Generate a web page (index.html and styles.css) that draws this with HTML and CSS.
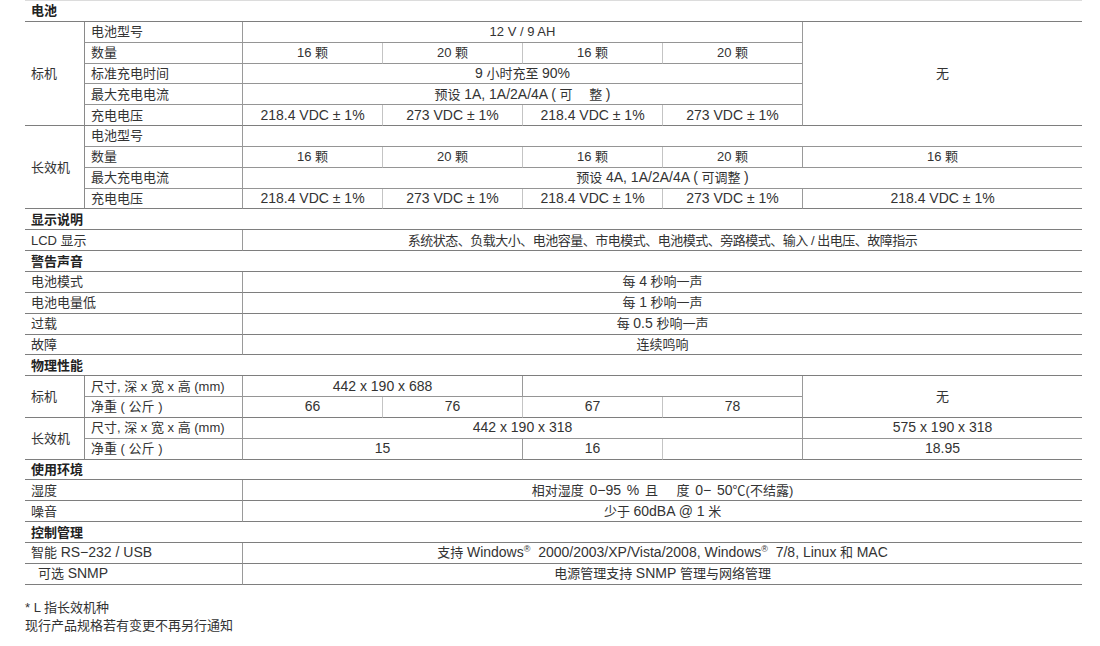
FILE: index.html
```html
<!DOCTYPE html>
<html lang="zh-CN">
<head>
<meta charset="utf-8">
<title>规格表</title>
<link rel="stylesheet" href="styles.css">
</head>
<body>
<table class="spec">
  <colgroup>
    <col class="c-grp"><col class="c-sub"><col class="c-d"><col class="c-d"><col class="c-d"><col class="c-d"><col class="c-w">
  </colgroup>
  <tbody>
    <tr><td class="sec" colspan="7">电池</td></tr>
    <tr>
      <td class="grp" rowspan="5">标机</td>
      <td class="sub inner">电池型号</td>
      <td class="val vl inner" colspan="4">12 V / 9 AH</td>
      <td class="val vl" rowspan="5">无</td>
    </tr>
    <tr>
      <td class="sub inner">数量</td>
      <td class="val vl inner">16 颗</td><td class="val dl inner">20 颗</td><td class="val dl inner">16 颗</td><td class="val dl inner">20 颗</td>
    </tr>
    <tr>
      <td class="sub inner">标准充电时间</td>
      <td class="val vl inner" colspan="4"><span class="en">9</span> 小时充至 <span class="en">90%</span></td>
    </tr>
    <tr>
      <td class="sub inner">最大充电电流</td>
      <td class="val vl inner" colspan="4">预设 <span class="en">1A, 1A/2A/4A (</span> 可&emsp; 整 <span class="en">)</span></td>
    </tr>
    <tr>
      <td class="sub">充电电压</td>
      <td class="val vl en">218.4 VDC ± 1%</td><td class="val dl en">273 VDC ± 1%</td><td class="val dl en">218.4 VDC ± 1%</td><td class="val dl en">273 VDC ± 1%</td>
    </tr>
    <tr>
      <td class="grp" rowspan="4">长效机</td>
      <td class="sub inner">电池型号</td>
      <td class="val vl inner" colspan="5"></td>
    </tr>
    <tr>
      <td class="sub inner">数量</td>
      <td class="val vl inner">16 颗</td><td class="val dl inner">20 颗</td><td class="val dl inner">16 颗</td><td class="val dl inner">20 颗</td><td class="val vl inner">16 颗</td>
    </tr>
    <tr>
      <td class="sub inner">最大充电电流</td>
      <td class="val vl inner" colspan="5">预设 <span class="en">4A, 1A/2A/4A (</span> 可调整 <span class="en">)</span></td>
    </tr>
    <tr>
      <td class="sub">充电电压</td>
      <td class="val vl en">218.4 VDC ± 1%</td><td class="val dl en">273 VDC ± 1%</td><td class="val dl en">218.4 VDC ± 1%</td><td class="val dl en">273 VDC ± 1%</td><td class="val vl en">218.4 VDC ± 1%</td>
    </tr>

    <tr><td class="sec" colspan="7">显示说明</td></tr>
    <tr>
      <td class="lab" colspan="2">LCD 显示</td>
      <td class="val vl tight" colspan="5">系统状态、负载大小、电池容量、市电模式、电池模式、旁路模式、输入 / 出电压、故障指示</td>
    </tr>

    <tr><td class="sec" colspan="7">警告声音</td></tr>
    <tr><td class="lab" colspan="2">电池模式</td><td class="val vl" colspan="5">每 <span class="en">4</span> 秒响一声</td></tr>
    <tr><td class="lab" colspan="2">电池电量低</td><td class="val vl" colspan="5">每 <span class="en">1</span> 秒响一声</td></tr>
    <tr><td class="lab" colspan="2">过载</td><td class="val vl" colspan="5">每 <span class="en">0.5</span> 秒响一声</td></tr>
    <tr><td class="lab" colspan="2">故障</td><td class="val vl" colspan="5">连续鸣响</td></tr>

    <tr><td class="sec" colspan="7">物理性能</td></tr>
    <tr>
      <td class="grp" rowspan="2">标机</td>
      <td class="sub inner">尺寸, 深 x 宽 x 高 (mm)</td>
      <td class="val vl inner en" colspan="2">442 x 190 x 688</td>
      <td class="val vl inner" colspan="2"></td>
      <td class="val vl" rowspan="2">无</td>
    </tr>
    <tr>
      <td class="sub">净重 ( 公斤 )</td>
      <td class="val vl en">66</td><td class="val dl en">76</td><td class="val dl en">67</td><td class="val dl en">78</td>
    </tr>
    <tr>
      <td class="grp" rowspan="2">长效机</td>
      <td class="sub inner">尺寸, 深 x 宽 x 高 (mm)</td>
      <td class="val vl inner en" colspan="4">442 x 190 x 318</td>
      <td class="val vl inner en">575 x 190 x 318</td>
    </tr>
    <tr>
      <td class="sub">净重 ( 公斤 )</td>
      <td class="val vl en" colspan="2">15</td><td class="val vl en">16</td><td class="val dl"></td><td class="val vl en">18.95</td>
    </tr>

    <tr><td class="sec" colspan="7">使用环境</td></tr>
    <tr><td class="lab" colspan="2">湿度</td><td class="val vl loose" colspan="5">相对湿度 <span class="en">0−95 %</span> 且&emsp; 度 <span class="en">0− 50</span>℃(不结露)</td></tr>
    <tr><td class="lab" colspan="2">噪音</td><td class="val vl" colspan="5">少于 <span class="en">60dBA @ 1</span> 米</td></tr>

    <tr><td class="sec" colspan="7">控制管理</td></tr>
    <tr><td class="lab" colspan="2">智能 <span class="en">RS−232 / USB</span></td><td class="val vl" colspan="5">支持 <span class="en">Windows<sup>®</sup>&nbsp; 2000/2003/XP/Vista/2008, Windows<sup>®</sup>&nbsp; 7/8, Linux</span> 和 <span class="en">MAC</span></td></tr>
    <tr><td class="lab indent" colspan="2">可选 <span class="en">SNMP</span></td><td class="val vl" colspan="5">电源管理支持 <span class="en">SNMP</span> 管理与网络管理</td></tr>
  </tbody>
</table>

<div class="notes">
  <p class="note">* L 指长效机种</p>
  <p class="note">现行产品规格若有变更不再另行通知</p>
</div>
</body>
</html>
```

FILE: styles.css
```css
html, body {
  margin: 0;
  padding: 0;
  background: #ffffff;
}

body {
  font-family: "Liberation Sans", "Noto Sans CJK SC", sans-serif;
  color: #333333;
  font-size: 13px;
}

.spec {
  margin-left: 25px;
  width: 1057px;
  table-layout: fixed;
  border-collapse: separate;
  border-spacing: 0;
  border-top: 1px solid #dcdcdc;
}

.c-grp { width: 59px; }
.c-sub { width: 158px; }
.c-d { width: 140px; }
.c-w { width: 280px; }

.spec tr {
  height: 20.85px;
}

.spec td {
  box-sizing: border-box;
  padding: 0;
  line-height: 15px;
  border-bottom: 1px solid #7e7e7e;
  vertical-align: middle;
  white-space: nowrap;
  overflow: hidden;
}

.spec td.inner {
  border-bottom-color: #959595;
}

.sec {
  font-weight: bold;
  color: #222222;
  padding-left: 6px !important;
}

.grp,
.lab {
  text-align: left;
  padding-left: 6px !important;
}

.indent {
  padding-left: 13px !important;
}

.sub {
  text-align: left;
  padding-left: 6px !important;
  border-left: 1px solid #8a8a8a;
}

.val {
  text-align: center;
}

.en {
  font-size: 14px;
}

.tight {
  letter-spacing: -0.5px;
}

.loose {
  word-spacing: 2px;
}

.vl {
  border-left: 1px solid #9a9a9a;
}

.dl {
  border-left: 1px solid #c4c4c4;
}

sup {
  font-size: 9px;
  line-height: 0;
  vertical-align: 5px;
}

.notes {
  margin: 14px 0 0 25px;
}

.note {
  margin: 0;
  font-size: 13px;
  line-height: 18px;
  color: #333333;
}
```
